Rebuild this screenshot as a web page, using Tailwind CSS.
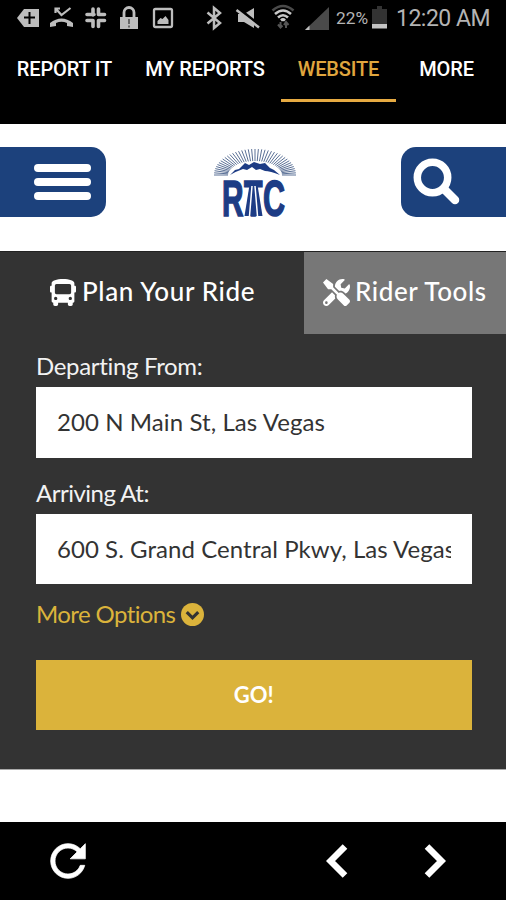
<!DOCTYPE html>
<html lang="en">
<head>
<meta charset="utf-8">
<title>RTC</title>
<script src="https://cdn.jsdelivr.net/npm/@tailwindcss/browser@4"></script>
</head>
<body class="w-[506px] h-[900px] overflow-hidden bg-black flex flex-col font-[Lato,sans-serif]">
<header class="h-[124px] shrink-0 bg-black font-[Roboto,sans-serif]">
  <div class="h-[36px] flex items-center text-[#b4b4b4]">
    <svg class="w-[330px] h-[36px] shrink-0" viewBox="0 0 330 36" fill="#bdbdbd">
      <path d="M24 9h15v18H24l-7-9z"/><path d="M29.500 12v12M24 17.500h11" stroke="#000" stroke-width="2"/>
      <path d="M50 27v-4q11.500-9 23 0v4l-6-1v-3q-5.500-2.500-11 0v3z"/><path d="M55.500 13V8.500H60M56 9l5.500 6 9-7" fill="none" stroke="#bdbdbd" stroke-width="2.200"/>
      <g fill="none" stroke="#bdbdbd" stroke-width="3.600" stroke-linecap="round"><path d="M93 9v6M87 14.500h7M98.500 9v5.500M98.500 14.500h6M93 20.500v6M87 20.500h6M98.500 20.500v6M98.500 20.500h6"/></g>
      <path d="M120 17h18v12h-18z"/><path d="M124 17v-4.500a5 5 0 0 1 10 0V17" fill="none" stroke="#bdbdbd" stroke-width="2.800"/><path d="M129 19v5M129 25.500v2" stroke="#666" stroke-width="2"/>
      <rect x="154" y="9" width="18" height="18" rx="1.500" fill="none" stroke="#bdbdbd" stroke-width="2.300"/><path d="M157.500 24v-3l3-3 2 1 3-3 3 4v4z"/>
      <path d="M207.500 12.500 220 23l-6 5V8l6 5-12.500 10.500" fill="none" stroke="#bdbdbd" stroke-width="2.500"/>
      <path d="M238 14h6l10-6v20l-10-6h-6z"/><path d="M237 7.500 260 25.500" stroke="#000" stroke-width="3"/><path d="M236.500 10 259 27.500" stroke="#bdbdbd" stroke-width="2.500"/>
      <g fill="none" stroke-width="2.600"><path d="M272.500 10.500q10.500-9 21 0" stroke="#4a4a4a"/><path d="M275 14q8-7 16 0M278 17.500q5-4.500 10 0" stroke="#c8c8c8"/><path d="M281 20.500q2-2 4 0" stroke="#c8c8c8"/><path d="M280.500 22v5M278 24.500l2.500 3 2-2M286 28v-5M284 25l2-3 2.500 3" stroke="#555" stroke-width="2"/></g>
      <path d="M329 7v23h-24z" fill="#4a4a4a"/><path d="M309.500 25.500V30H305z"/>
    </svg>
    <span class="ml-[6px] w-[36px] text-[17.3px] whitespace-nowrap leading-none pt-[1px]">22%</span>
    <svg class="w-[15px] h-[36px] shrink-0" viewBox="0 0 15 36"><path d="M0 9h5V6h5v3h5v15H0z" fill="#333"/><path d="M0 24h15v4.500H0z" fill="#c4c4c4"/></svg>
    <span class="ml-[9px] text-[23px] tracking-[-0.5px] whitespace-nowrap leading-none pt-[1px]">12:20 AM</span>
  </div>
  <nav class="flex h-[66px] text-[20px] tracking-[-0.15px] font-medium text-white leading-[66px] whitespace-nowrap">
    <a class="w-[129px] text-center">REPORT IT</a>
    <a class="w-[152px] text-center">MY REPORTS</a>
    <a class="w-[115px] text-center text-[#e0a63e] border-b-[3px] border-[#e6aa42]">WEBSITE</a>
    <a class="w-[101px] text-center">MORE</a>
  </nav>
</header>
<section class="h-[127px] shrink-0 bg-white flex justify-between items-start pt-[23px]">
  <div class="w-[106px] h-[70px] rounded-r-[15px] bg-[#1c417c] flex flex-col gap-[6px] pl-[34px] pt-[17px]">
    <i class="w-[57px] h-[8px] rounded-full bg-white"></i><i class="w-[57px] h-[8px] rounded-full bg-white"></i><i class="w-[57px] h-[8px] rounded-full bg-white"></i>
  </div>
  <svg class="w-[100px] h-[90px]" viewBox="204 147 100 90" fill="#1d3c85">
    <g id="rays" stroke="#5a7096" stroke-width="1"></g>
    <path d="M230 175l5-5 4-1 6-6 4 2 5-3 6 2 5-1 5 5 4 2 6 5q-10-4-15-4l-5-2-4 1-4-3-5 3-4-1q-6 2-13 6z"/>
    <g font-family="Liberation Sans Narrow, Liberation Sans, sans-serif" font-weight="700" font-size="50" stroke="#1d3c85" stroke-width="1.600">
      <text x="222" y="215.500" textLength="21.500" lengthAdjust="spacingAndGlyphs">R</text>
      <text x="244" y="215.500" textLength="18.500" lengthAdjust="spacingAndGlyphs">T</text>
      <text x="263" y="215.500" textLength="22" lengthAdjust="spacingAndGlyphs">C</text>
    </g>
    <path d="M249.500 185h8l5 31H244.500z"/><path d="M252 186l-2.500 30M255 186l2.500 30" stroke="#fff" stroke-width="1.500"/>
  </svg>
  <div class="w-[105px] h-[70px] rounded-l-[15px] bg-[#1c417c] pl-[10px] pt-[9px]">
    <svg class="w-[52px] h-[52px]" viewBox="0 0 52 52" fill="none" stroke="#fff"><circle cx="21.500" cy="21.500" r="15.200" stroke-width="7.500"/><path d="M33 33l11 11" stroke-width="8.500" stroke-linecap="round"/></svg>
  </div>
</section>
<main class="h-[518px] shrink-0 bg-[#333]">
  <div class="flex h-[83px] text-white text-[26px] font-medium whitespace-nowrap border-t border-[#222]">
    <div class="w-[304px] flex items-center pl-[50px]">
      <svg class="w-[26px] h-[27px] shrink-0 mb-[2px]" viewBox="0 0 512 512" preserveAspectRatio="none" fill="#fff"><path d="M488 128h-8V80c0-44.800-99.200-80-224-80S32 35.200 32 80v48h-8c-13.250 0-24 10.740-24 24v80c0 13.250 10.750 24 24 24h8v160c0 17.670 14.330 32 32 32v32c0 17.670 14.330 32 32 32h32c17.670 0 32-14.330 32-32v-32h192v32c0 17.670 14.330 32 32 32h32c17.670 0 32-14.330 32-32v-32h6.400c16 0 25.600-12.800 25.600-25.600V256h8c13.250 0 24-10.750 24-24v-80c0-13.260-10.750-24-24-24zM112 400c-17.670 0-32-14.330-32-32s14.330-32 32-32 32 14.330 32 32-14.330 32-32 32zm16-112c-17.670 0-32-14.330-32-32V128c0-17.670 14.330-32 32-32h256c17.670 0 32 14.330 32 32v128c0 17.670-14.330 32-32 32H128zm272 112c-17.670 0-32-14.330-32-32s14.330-32 32-32 32 14.330 32 32-14.330 32-32 32z"/></svg>
      <span class="ml-[6px] mb-[3px] tracking-[0.64px]">Plan Your Ride</span>
    </div>
    <div class="flex-1 bg-[#777] flex items-center pl-[19px]">
      <svg class="w-[27px] h-[27px] shrink-0 mb-[2px]" viewBox="0 0 512 512" fill="#fff"><path d="M501.100 395.700L384 278.600c-23.100-23.100-57.600-27.600-85.400-13.900L192 158.100V96L64 0 0 64l96 128h62.100l106.600 106.600c-13.600 27.800-9.200 62.300 13.900 85.400l117.100 117.100c14.600 14.600 38.200 14.600 52.700 0l52.700-52.700c14.500-14.600 14.500-38.200 0-52.700zM331.700 225c28.300 0 54.900 11 74.900 31l19.400 19.400c15.800-6.900 30.800-16.500 43.800-29.500 37.100-37.100 49.700-89.300 37.900-136.700-2.200-9-13.500-12.100-20.100-5.500l-74.400 74.400-67.900-11.300L334 98.900l74.400-74.400c6.600-6.600 3.400-17.900-5.700-20.200-47.400-11.700-99.600.9-136.600 37.900-28.500 28.500-41.900 66.100-41.200 103.600l82.100 82.100c8.100-1.900 16.500-2.900 24.700-2.900zm-103.900 82l-56.700-56.700L18.700 402.800c-25 25-25 65.500 0 90.500s65.500 25 90.500 0l123.600-123.600c-7.600-19.900-9.900-41.600-5-62.700zM64 472c-13.200 0-24-10.800-24-24 0-13.300 10.700-24 24-24s24 10.700 24 24c0 13.200-10.700 24-24 24z"/></svg>
      <span class="ml-[5px] mb-[3px] tracking-[0.6px]">Rider Tools</span>
    </div>
  </div>
  <div class="pl-[36px] w-[471.5px] text-[24px] text-[#f2f2f2] whitespace-nowrap">
    <div class="h-[53px] pt-[16px] leading-[32px] tracking-[-0.33px]"><span>Departing From:</span></div>
    <div class="h-[71px] bg-white px-[21px] text-[#333] leading-[70px] tracking-[0.08px]"><div class="overflow-hidden"><span>200 N Main St, Las Vegas</span></div></div>
    <div class="h-[56px] pt-[19px] leading-[32px] tracking-[-0.5px]"><span>Arriving At:</span></div>
    <div class="h-[70px] bg-white px-[21px] text-[#333] leading-[69px] tracking-[0.05px]"><div class="overflow-hidden"><span>600 S. Grand Central Pkwy, Las Vegas</span></div></div>
    <div class="h-[76px] pt-[14px] leading-[32px] text-[#dbb33b] flex items-start"><span class="tracking-[-0.6px]">More Options</span>
      <svg class="w-[23px] h-[23px] ml-[6px] mt-[5px]" viewBox="0 0 22 22"><circle cx="11" cy="11" r="11" fill="#dbb33b"/><path d="M5.500 8.800l5.500 5.400 5.500-5.400" fill="none" stroke="#333" stroke-width="3"/></svg>
    </div>
    <div class="h-[70px] bg-[#dbb33b] text-center leading-[70px] text-white text-[22px] font-bold"><span>GO!</span></div>
  </div>
</main>
<div class="h-[53px] shrink-0 bg-white border-t border-[#aaa]"></div>
<footer class="h-[78px] shrink-0 bg-black flex items-start pt-[13px] pl-[42px]">
  <svg class="w-[52px] h-[52px]" viewBox="0 0 24 24" fill="#fff" stroke="#fff" stroke-width=".35"><path d="M17.650 6.350C16.200 4.900 14.210 4 12 4c-4.420 0-7.990 3.580-7.990 8s3.570 8 7.990 8c3.730 0 6.840-2.550 7.730-6h-2.080c-.82 2.330-3.040 4-5.650 4-3.310 0-6-2.690-6-6s2.690-6 6-6c1.660 0 3.140.69 4.220 1.780L13 11h7V4l-2.350 2.350z"/></svg>
  <svg class="w-[22px] h-[34px] ml-[232px] mt-[9px]" viewBox="0 0 22 34" fill="none" stroke="#fff" stroke-width="6.500"><path d="M19 2.500 4.500 17 19 31.500"/></svg>
  <svg class="w-[22px] h-[34px] ml-[76px] mt-[9px]" viewBox="0 0 22 34" fill="none" stroke="#fff" stroke-width="6.500"><path d="M3 2.500 17.500 17 3 31.500"/></svg>
</footer>
<script>
const rays = document.getElementById('rays');
for (let i = 0; i <= 38; i++) {
  const a = Math.PI * i / 38, l = document.createElementNS('http://www.w3.org/2000/svg', 'line');
  l.setAttribute('x1', 255 - 27 * Math.cos(a)); l.setAttribute('y1', 175 - 14 * Math.sin(a));
  l.setAttribute('x2', 255 - 41 * Math.cos(a)); l.setAttribute('y2', 175 - 26 * Math.sin(a));
  rays.appendChild(l);
}
</script>
</body>
</html>
